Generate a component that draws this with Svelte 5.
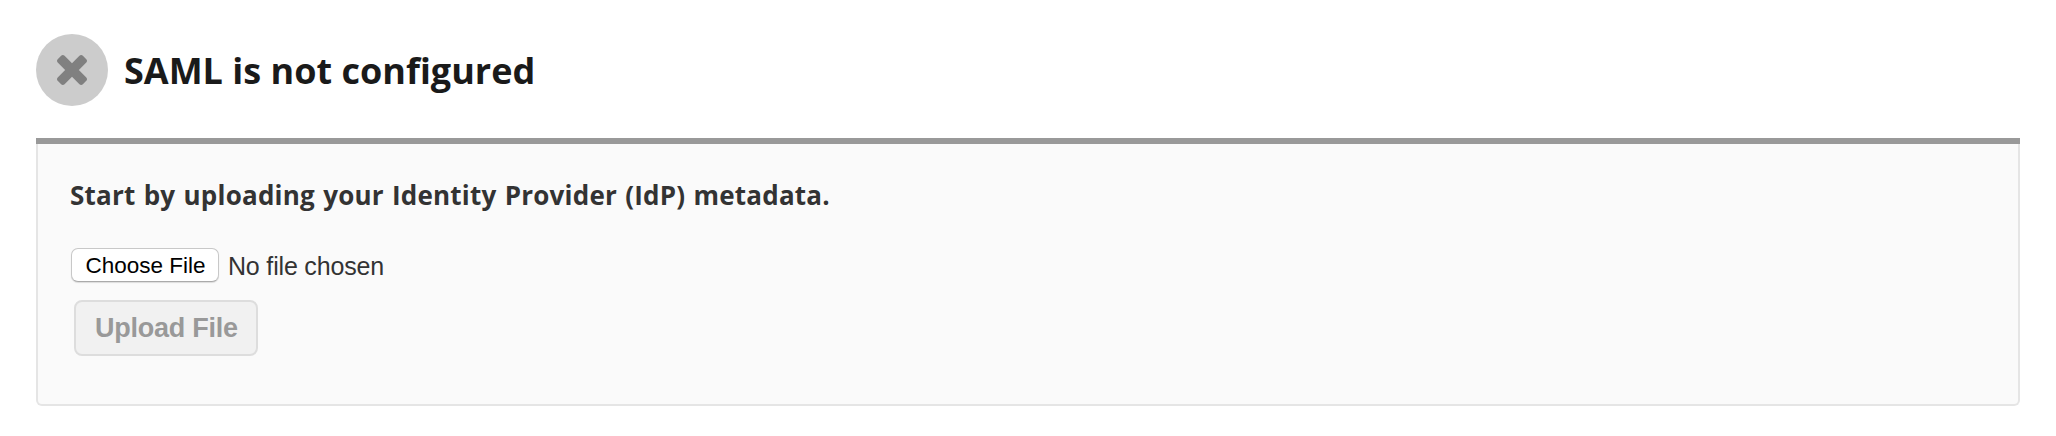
<script>
  let fileName = $state('');
</script>

<main>
  <header>
    <span class="status">
      <svg viewBox="302 366 1188 1188" width="30" height="30" aria-hidden="true">
        <path d="M1490 1322q0 40-28 68l-136 136q-28 28-68 28t-68-28l-294-294-294 294q-28 28-68 28t-68-28l-136-136q-28-28-28-68t28-68l294-294-294-294q-28-28-28-68t28-68l136-136q28-28 68-28t68 28l294 294 294-294q28-28 68-28t68 28l136 136q28 28 28 68t-28 68l-294 294 294 294q28 28 28 68z" />
      </svg>
    </span>
    <h1>SAML is not configured</h1>
  </header>

  <div class="rule"></div>
  <section>
    <h2>Start by uploading your Identity Provider (IdP) metadata.</h2>
    <div class="picker">
      <button class="choose" type="button">Choose File</button>
      <span class="name">{fileName || 'No file chosen'}</span>
    </div>
    <button class="upload" type="button" disabled={!fileName}>Upload File</button>
  </section>
</main>

<style>
  :global(body) {
    background: #fff;
  }
  main {
    box-sizing: border-box;
    height: 436px;
    padding: 34px 36px 0;
  }
  header {
    display: flex;
    align-items: center;
    height: 72px;
    margin-bottom: 32px;
  }
  .status {
    display: flex;
    align-items: center;
    justify-content: center;
    width: 72px;
    height: 72px;
    border-radius: 50%;
    background: #ccc;
  }
  .status svg {
    fill: #808080;
  }
  h1 {
    margin: 0 0 0 16px;
    padding-top: 1px;
    font: 700 36px/50px 'Open Sans', sans-serif;
    color: #1a1a1a;
    white-space: nowrap;
  }
  .rule {
    height: 6px;
    background: #999;
  }
  section {
    box-sizing: border-box;
    height: 262px;
    padding: 32px 32px 0;
    border: 2px solid #e5e5e5;
    border-top: 0;
    border-radius: 0 0 6px 6px;
    background: #fafafa;
  }
  h2 {
    margin: 0 0 34px;
    font: 700 26px/38px 'Open Sans', sans-serif;
    letter-spacing: 0.22px;
    word-spacing: 1.2px;
    color: #333;
    white-space: nowrap;
  }
  .picker {
    display: flex;
    align-items: center;
    height: 34px;
    margin-bottom: 18px;
  }
  button {
    box-sizing: border-box;
    display: block;
    margin: 0;
    padding: 0;
    text-align: center;
    white-space: nowrap;
  }
  .choose {
    width: 148px;
    height: 34px;
    margin-left: 1px;
    padding: 2px 0 0 1px;
    border: 1px solid #c8c8c8;
    border-bottom-color: #aaa;
    border-radius: 7px;
    background: #fff;
    box-shadow: 0 1px 1px rgba(0, 0, 0, 0.12);
    font: 22.5px/30px 'Liberation Sans', Arial, sans-serif;
    color: #000;
  }
  .name {
    padding-top: 2px;
    margin-left: 9px;
    font: 25px/32px 'Liberation Sans', Arial, sans-serif;
    letter-spacing: -0.18px;
    color: #333;
  }
  .upload {
    width: 184px;
    height: 56px;
    margin-left: 4px;
    padding-left: 1px;
    border: 2px solid #ddd;
    border-radius: 8px;
    background: #f1f1f1;
    font: 700 27px/50px 'Liberation Sans', Arial, sans-serif;
    letter-spacing: -0.25px;
    color: #999;
  }
</style>
